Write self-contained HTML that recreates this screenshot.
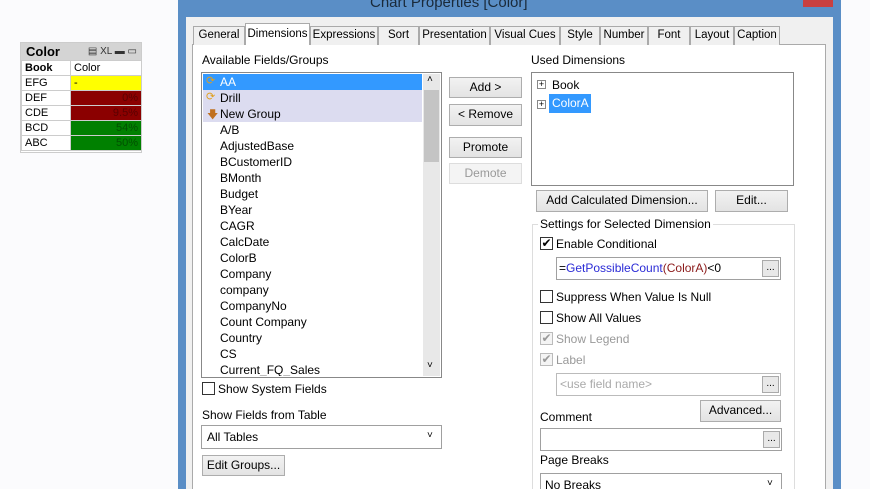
<!DOCTYPE html>
<html style="overflow:hidden;width:870px;height:489px"><head><style>
*{box-sizing:border-box;margin:0;padding:0}
body{width:870px;height:489px;overflow:hidden;background:#fbfbfd;font-family:"Liberation Sans",sans-serif;font-size:12px;color:#000;position:relative}
.a{position:absolute;white-space:nowrap}
.btn{position:absolute;border:1px solid #adadad;background:linear-gradient(#f2f2f2,#e3e3e3);text-align:center;line-height:19px;white-space:nowrap}
.cb{position:absolute;width:13px;height:13px;border:1px solid #333;background:#fff}
.cbd{border-color:#bbb;background:#f4f4f4}
.box{position:absolute;border:1px solid #a0a0a0;background:#fff}
.dots{position:absolute;width:17px;height:17px;border:1px solid #aaa;background:#e8e8e8;font-size:10px;text-align:center;line-height:13px}
.tab{position:absolute;top:26px;height:19px;border:1px solid #aaa;border-bottom:none;background:#f0f0f0;line-height:17px;text-align:center;white-space:nowrap;font-size:11.5px;overflow:hidden}
.li{position:absolute;left:220px;height:16px;line-height:16px;white-space:nowrap}
td{border:1px solid #ccc;height:15px;padding:0 3px;font-size:11px;line-height:13px}
</style></head><body>
<div class="a" style="left:20px;top:42px;width:122px;height:111px;border:1px solid #ccc;background:#fff">
 <div style="height:17px;background:#d4d4d4;font-weight:bold;font-size:13px;line-height:17px;padding-left:5px">Color<span style="float:right;font-weight:normal;font-size:10px;color:#333;padding-right:4px">&#9636; XL ▬ ▭</span></div>
 <table style="border-collapse:collapse;width:121px">
  <tr><td style="width:49px;font-weight:bold">Book</td><td>Color</td></tr>
  <tr><td>EFG</td><td style="background:#ffff00">-</td></tr>
  <tr><td>DEF</td><td style="background:#8b0000;text-align:right;color:#5a0000">0%</td></tr>
  <tr><td>CDE</td><td style="background:#8b0000;text-align:right;color:#5a0000">9.5%</td></tr>
  <tr><td>BCD</td><td style="background:#008000;text-align:right;color:#005000">54%</td></tr>
  <tr><td>ABC</td><td style="background:#008000;text-align:right;color:#005000">50%</td></tr>
 </table>
</div>
<div class="a" style="left:178px;top:0;width:663px;height:489px;background:#5a8ec6"></div>
<div class="a" style="left:370px;top:-6px;font-size:15px;color:#1a2a3a">Chart Properties [Color]</div>
<div class="a" style="left:803px;top:0;width:30px;height:7px;background:#c94040"></div>
<div class="a" style="left:186px;top:17px;width:647px;height:472px;background:#f0f0f0"></div>
<div class="a" style="left:192px;top:44px;width:634px;height:446px;background:#fff;border:1px solid #aaa;border-bottom:none"></div>
<div class="tab" style="left:193px;width:52px">General</div>
<div class="tab" style="left:245px;top:23px;height:22px;width:65px;background:#fff;z-index:2;line-height:20px">Dimensions</div>
<div class="tab" style="left:310px;width:68px">Expressions</div>
<div class="tab" style="left:378px;width:41px">Sort</div>
<div class="tab" style="left:419px;width:71px">Presentation</div>
<div class="tab" style="left:490px;width:70px">Visual Cues</div>
<div class="tab" style="left:560px;width:40px">Style</div>
<div class="tab" style="left:600px;width:48px">Number</div>
<div class="tab" style="left:648px;width:42px">Font</div>
<div class="tab" style="left:690px;width:44px">Layout</div>
<div class="tab" style="left:734px;width:46px">Caption</div>
<div class="a" style="left:202px;top:53px">Available Fields/Groups</div>
<div class="box" style="left:201px;top:72px;width:241px;height:306px;border-color:#888"></div>
<div class="a" style="left:203px;top:74px;width:219px;height:16px;background:#3399ff"></div>
<div class="a" style="left:203px;top:90px;width:219px;height:32px;background:#dcdcf0"></div>
<div class="a" style="left:423px;top:74px;width:17px;height:302px;background:#e8e8e8"></div>
<div class="a" style="left:424px;top:90px;width:15px;height:72px;background:#c4c4c4"></div>
<div class="a" style="left:427px;top:74px;font-size:10px">&#708;</div>
<div class="a" style="left:427px;top:360px;font-size:10px">&#709;</div>
<div class="a" style="left:206px;top:74px;color:#e0a020;font-size:11px">&#10227;</div>
<div class="a" style="left:206px;top:90px;color:#e0a020;font-size:11px">&#10227;</div>
<div class="a" style="left:207px;top:106px;color:#c07020;font-size:11px">&#129095;</div>
<div class="li" style="top:74px;color:#fff">AA</div>
<div class="li" style="top:90px">Drill</div>
<div class="li" style="top:106px">New Group</div>
<div class="li" style="top:122px">A/B</div>
<div class="li" style="top:138px">AdjustedBase</div>
<div class="li" style="top:154px">BCustomerID</div>
<div class="li" style="top:170px">BMonth</div>
<div class="li" style="top:186px">Budget</div>
<div class="li" style="top:202px">BYear</div>
<div class="li" style="top:218px">CAGR</div>
<div class="li" style="top:234px">CalcDate</div>
<div class="li" style="top:250px">ColorB</div>
<div class="li" style="top:266px">Company</div>
<div class="li" style="top:282px">company</div>
<div class="li" style="top:298px">CompanyNo</div>
<div class="li" style="top:314px">Count Company</div>
<div class="li" style="top:330px">Country</div>
<div class="li" style="top:346px">CS</div>
<div class="li" style="top:362px;height:14px;overflow:hidden">Current_FQ_Sales</div>
<div class="cb" style="left:202px;top:382px"></div>
<div class="a" style="left:218px;top:382px">Show System Fields</div>
<div class="a" style="left:202px;top:408px">Show Fields from Table</div>
<div class="box" style="left:201px;top:425px;width:241px;height:24px"></div>
<div class="a" style="left:207px;top:430px">All Tables</div>
<div class="a" style="left:427px;top:430px;font-size:10px">&#709;</div>
<div class="btn" style="left:202px;top:455px;width:83px;height:21px">Edit Groups...</div>
<div class="btn" style="left:449px;top:77px;width:73px;height:21px">Add &gt;</div>
<div class="btn" style="left:449px;top:104px;width:73px;height:22px">&lt; Remove</div>
<div class="btn" style="left:449px;top:137px;width:73px;height:21px">Promote</div>
<div class="btn" style="left:449px;top:163px;width:73px;height:21px;color:#999;border-color:#ddd;background:#f4f4f4">Demote</div>
<div class="a" style="left:531px;top:53px">Used Dimensions</div>
<div class="box" style="left:531px;top:72px;width:263px;height:114px;border-color:#888"></div>
<div class="a" style="left:537px;top:80px;width:9px;height:9px;border:1px solid #888;font-size:9px;line-height:7px;text-align:center">+</div>
<div class="a" style="left:552px;top:78px">Book</div>
<div class="a" style="left:537px;top:100px;width:9px;height:9px;border:1px solid #888;font-size:9px;line-height:7px;text-align:center">+</div>
<div class="a" style="left:549px;top:94px;width:42px;height:19px;background:#3399ff;color:#fff;line-height:19px;padding-left:3px">ColorA</div>
<div class="btn" style="left:536px;top:190px;width:172px;height:22px">Add Calculated Dimension...</div>
<div class="btn" style="left:715px;top:190px;width:73px;height:22px">Edit...</div>
<div class="a" style="left:532px;top:224px;width:263px;height:266px;border:1px solid #ddd;border-bottom:none"></div>
<div class="a" style="left:538px;top:217px;background:#fff;padding:0 2px">Settings for Selected Dimension</div>
<div class="cb" style="left:540px;top:237px;font-size:12px;line-height:10px;text-align:center">&#10004;</div>
<div class="a" style="left:556px;top:237px">Enable Conditional</div>
<div class="box" style="left:556px;top:257px;width:225px;height:23px"></div>
<div class="a" style="left:559px;top:261px">=<span style="color:#2b2bd6">GetPossibleCount</span><span style="color:#8b1a1a">(ColorA)</span>&lt;0</div>
<div class="dots" style="left:762px;top:260px">...</div>
<div class="cb" style="left:540px;top:290px"></div>
<div class="a" style="left:556px;top:290px">Suppress When Value Is Null</div>
<div class="cb" style="left:540px;top:311px"></div>
<div class="a" style="left:556px;top:311px">Show All Values</div>
<div class="cb cbd" style="left:540px;top:332px;color:#999;font-size:12px;line-height:10px;text-align:center">&#10004;</div>
<div class="a" style="left:556px;top:332px;color:#999">Show Legend</div>
<div class="cb cbd" style="left:540px;top:353px;color:#999;font-size:12px;line-height:10px;text-align:center">&#10004;</div>
<div class="a" style="left:556px;top:353px;color:#999">Label</div>
<div class="box" style="left:556px;top:373px;width:225px;height:23px;border-color:#bbb"></div>
<div class="a" style="left:560px;top:377px;color:#aaa">&lt;use field name&gt;</div>
<div class="dots" style="left:762px;top:376px">...</div>
<div class="btn" style="left:700px;top:400px;width:81px;height:22px">Advanced...</div>
<div class="a" style="left:540px;top:410px">Comment</div>
<div class="box" style="left:540px;top:428px;width:242px;height:23px"></div>
<div class="dots" style="left:763px;top:431px">...</div>
<div class="a" style="left:540px;top:453px">Page Breaks</div>
<div class="box" style="left:540px;top:473px;width:242px;height:17px;border-bottom:none"></div>
<div class="a" style="left:545px;top:478px">No Breaks</div>
<div class="a" style="left:767px;top:478px;font-size:10px">&#709;</div>
</body></html>
